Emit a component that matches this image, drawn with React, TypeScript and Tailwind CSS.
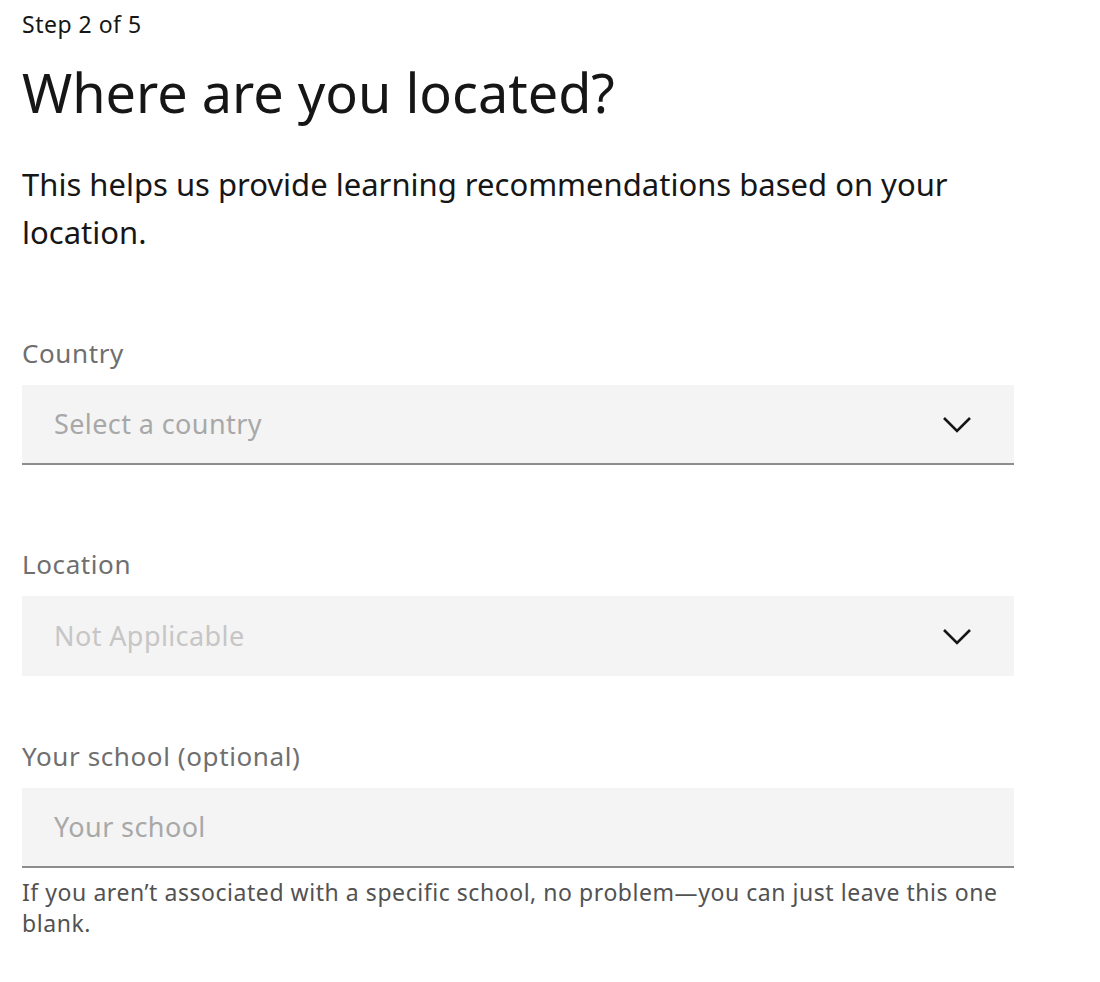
const font = { fontFamily: '"Noto Sans", "Open Sans", sans-serif' };

function Chevron() {
  return (
    <svg width="30" height="18" viewBox="0 0 30 18" className="shrink-0">
      <path d="M2 3 L15 16 L28 3" fill="none" stroke="#161616" strokeWidth="2.6" />
    </svg>
  );
}

function SelectField({ label, value, disabled }: { label: string; value: string; disabled?: boolean }) {
  return (
    <div>
      <div className="text-[26px] leading-[32px] tracking-[0.6px] text-[#6f6f6f]">{label}</div>
      <div
        className={`mt-[16px] flex h-[80px] items-center justify-between bg-[#f4f4f4] pl-[32px] pr-[42px] ${
          disabled ? '' : 'border-b-2 border-[#8d8d8d]'
        }`}
      >
        <span className={`text-[27px] tracking-[0.4px] ${disabled ? 'text-[#c6c6c6]' : 'text-[#a8a8a8]'}`}>
          {value}
        </span>
        <Chevron />
      </div>
    </div>
  );
}

export default function App() {
  return (
    <div className="min-h-screen bg-white px-[22px] pt-[8px] text-[#161616]" style={font}>
      <div className="w-[992px]">
        <div className="text-[23px] leading-[32px] tracking-[0.5px]">Step 2 of 5</div>
        <h1 className="mt-[20px] text-[54px] leading-[64px] font-normal">Where are you located?</h1>
        <p className="mt-[36px] text-[31px] leading-[48px]">
          This helps us provide learning recommendations based on your location.
        </p>
        <div className="mt-[81px]">
          <SelectField label="Country" value="Select a country" />
        </div>
        <div className="mt-[83px]">
          <SelectField label="Location" value="Not Applicable" disabled />
        </div>
        <div className="mt-[64px]">
          <div className="text-[26px] leading-[32px] tracking-[0.6px] text-[#6f6f6f]">Your school (optional)</div>
          <div className="mt-[16px] flex h-[80px] items-center border-b-2 border-[#8d8d8d] bg-[#f4f4f4] pl-[32px]">
            <span className="text-[27px] tracking-[0.4px] text-[#a8a8a8]">Your school</span>
          </div>
          <p className="mt-[9px] text-[23px] leading-[31px] tracking-[0.55px] text-[#525252]">
            If you aren’t associated with a specific school, no problem—you can just leave this one blank.
          </p>
        </div>
      </div>
    </div>
  );
}
